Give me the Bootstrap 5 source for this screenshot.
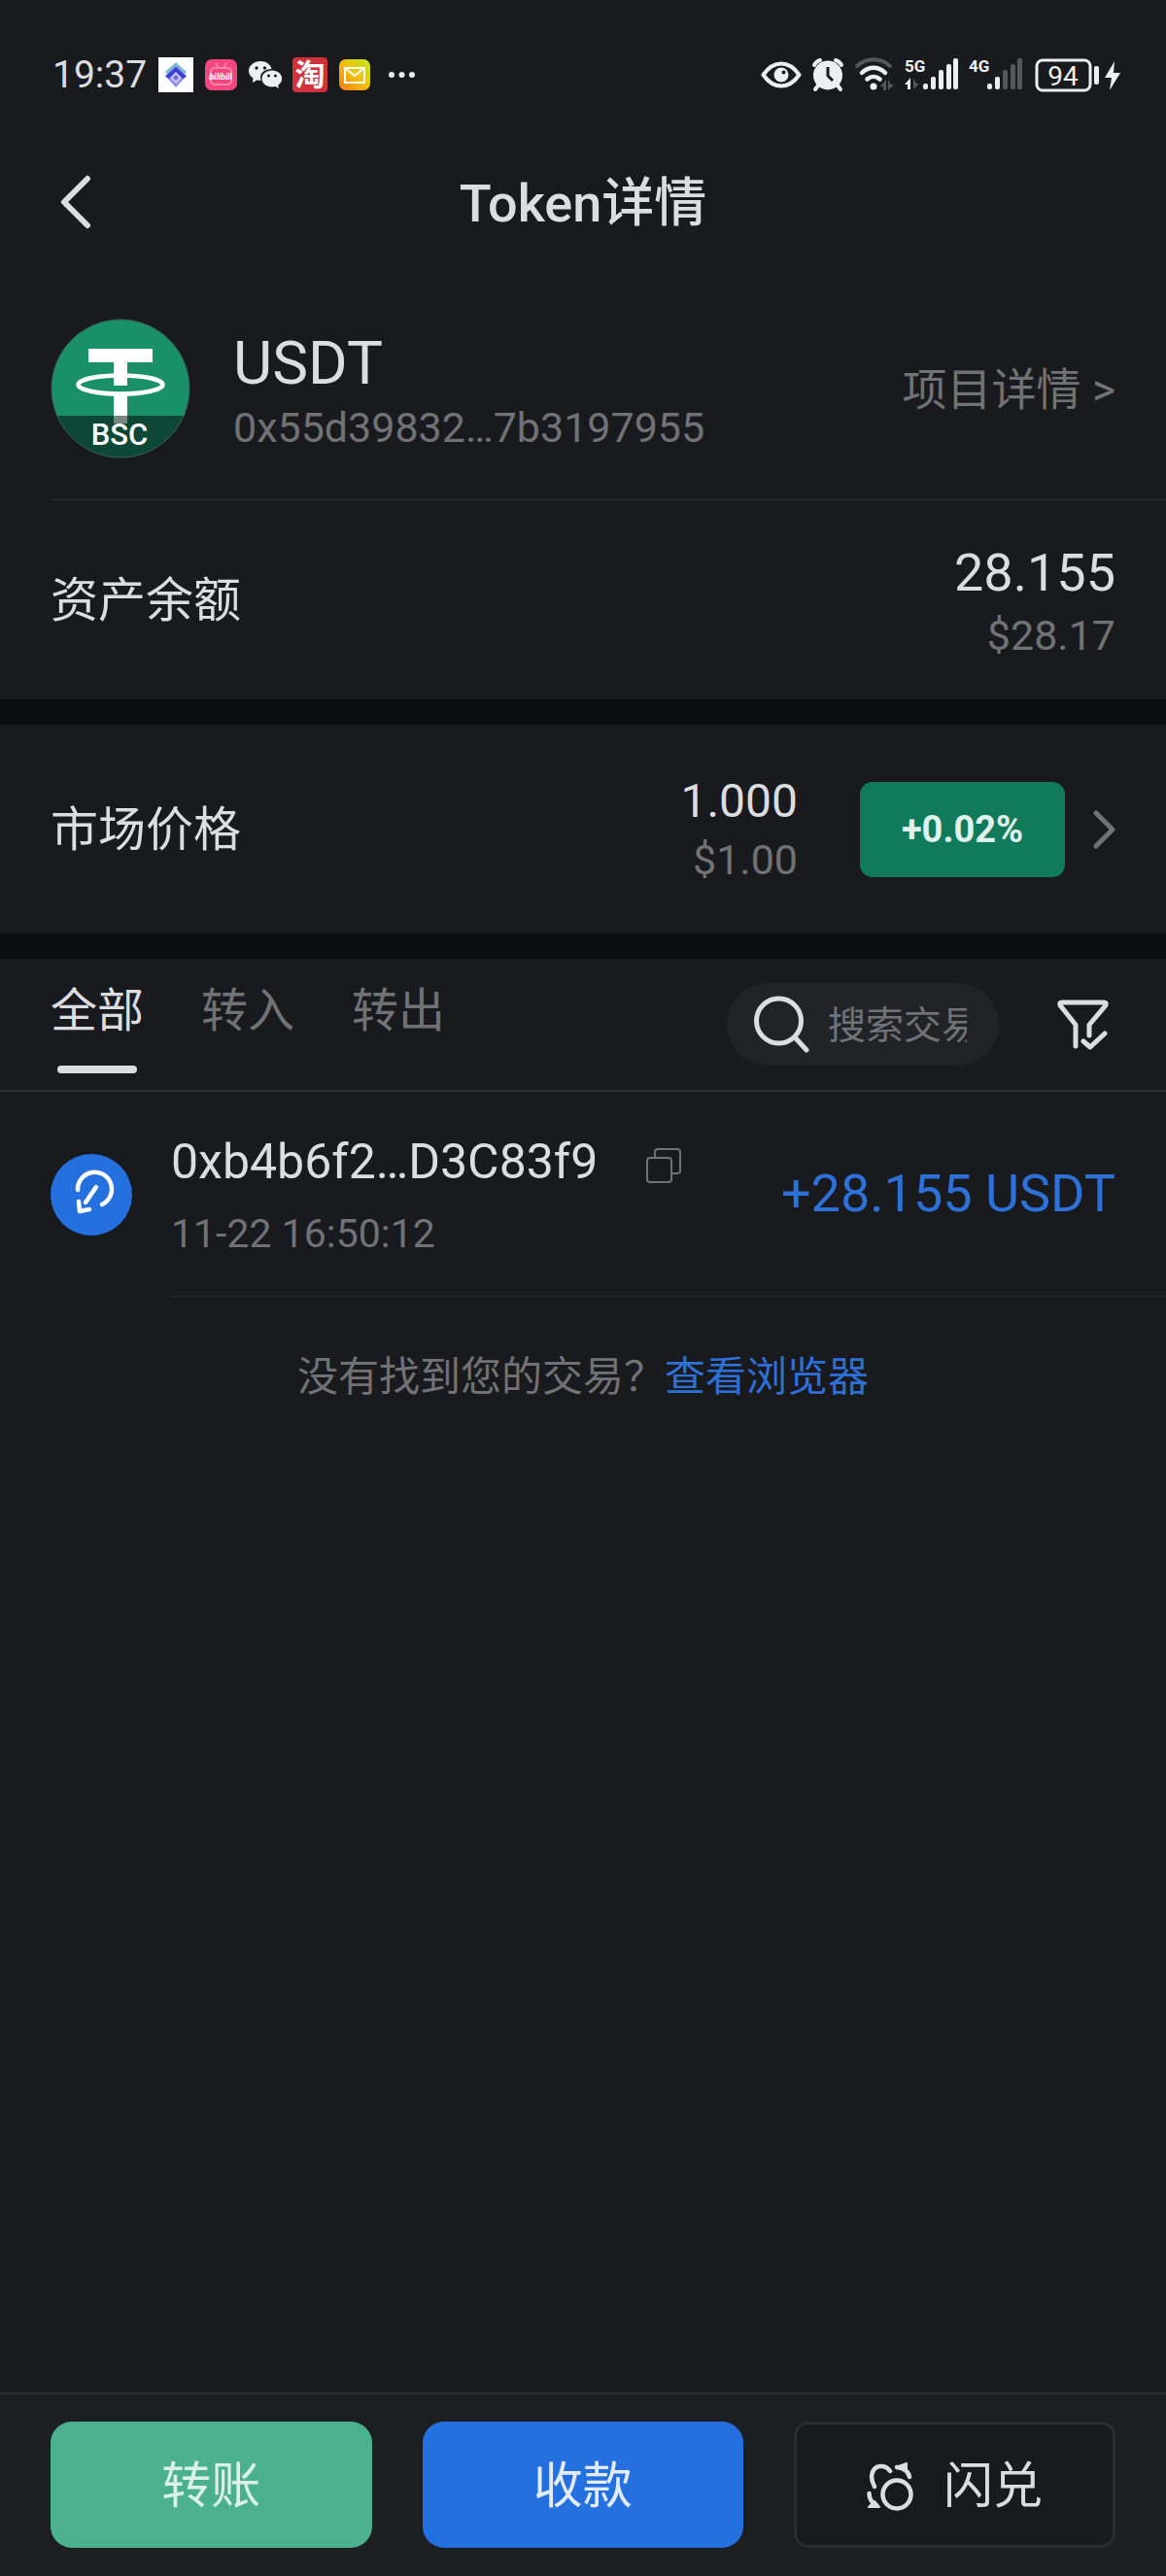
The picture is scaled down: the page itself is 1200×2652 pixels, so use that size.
<!DOCTYPE html>
<html lang="zh-CN">
<head>
<meta charset="utf-8">
<meta name="viewport" content="width=device-width, initial-scale=1">
<title>Token详情</title>
<link href="https://cdn.jsdelivr.net/npm/bootstrap@5.3.0/dist/css/bootstrap.min.css" rel="stylesheet">
<style>
  :root { --ink: #dcdde1; --dim: #717276; --edge: #2c2d31; --base: #191a1d; --brand: #2470df; --side: 52px; }
  body { background: var(--base); color: var(--ink); font-family: Roboto, "Noto Sans CJK SC", sans-serif; line-height: 64px; }
  svg { display: block; flex: none; }
  button { font: inherit; color: inherit; background: none; border: 0; padding: 0; }
  .side { padding-left: var(--side); padding-right: var(--side); }
  .dim { color: var(--dim); }
  .fs-label { font-size: 48px; }
  .fs-row { font-size: 49px; padding-top: 2px; }
  .fs-sub { font-size: 43px; }
  .fs-amount { font-size: 54px; }

  .status-bar { padding: 52px 47px 46px 54px; }
  .status-inner { height: 50px; }
  .clock { font-size: 39px; line-height: 50px; }
  .app-icons { gap: 10px; margin-left: 12px; }
  .sys-icons { gap: 10px; }

  .title-bar { height: 120px; display: grid; grid-template-columns: 1fr auto 1fr; padding-left: 58px; padding-right: 58px; }
  .title-bar h1 { font-size: 54px; font-weight: 500; line-height: 72px; padding-top: 4px; }

  .token-row { margin-left: var(--side); padding: 60px var(--side) 42px 0; border-bottom: 1px solid var(--edge); }
  .token-text { margin-left: 44px; padding-top: 4px; }
  .token-name { font-size: 62px; line-height: 76px; }
  .token-addr { line-height: 56px; }
  .project-link { font-size: 46px; color: var(--dim); text-decoration: none; padding-top: 2px; }

  .balance { height: 205px; }
  .balance-figures { padding-top: 8px; }
  .band { height: 26px; background: #0c0d0f; }
  .market { height: 215px; }
  .price { line-height: 60px; margin-right: 64px; padding-top: 3px; }
  .change { width: 211px; height: 98px; border-radius: 13px; background: #107a5b; color: #e0f1eb; font-size: 38px; font-weight: 700; margin-right: 28px; }

  .filter-row { border-bottom: 2px solid var(--edge); }
  .tab-set { gap: 59px; }
  .tab-set button { font-size: 48px; line-height: 72px; padding: 18px 0 17px; color: var(--dim); }
  .tab-set button::after { content: ""; display: block; width: 82px; height: 8px; margin: 20px auto 0; border-radius: 4px; }
  .tab-set button.active { color: var(--ink); }
  .tab-set button.active::after { background: var(--ink); }
  .search { width: 280px; height: 85px; border-radius: 43px; background: #222327; padding: 0 33px 0 27px; gap: 19px; margin-right: 58px; }
  .search input { flex: 1; min-width: 0; border: 0; padding: 3px 0 0; background: none; outline: 0; color: var(--ink); font-size: 39px; line-height: 60px; }
  .search input::placeholder { color: var(--dim); opacity: 1; }
  .filter-btn { margin-right: 4px; }

  .tx { padding-left: var(--side); gap: 40px; }
  .tx-body { height: 211px; padding-right: var(--side); border-bottom: 1px solid var(--edge); }
  .tx-text { padding-top: 8px; }
  .tx-hash { font-size: 50px; line-height: 74px; gap: 50px; }
  .tx-hash button { padding-top: 8px; }
  .tx-time { font-size: 41px; line-height: 74px; }
  .tx-amount, .explorer a { color: #2c70d8; }
  .explorer { font-size: 42px; line-height: 60px; padding-top: 53px; }
  .explorer a { text-decoration: none; }

  .actions { border-top: 2px solid var(--edge); background: #1d1e22; padding-top: 28px; padding-bottom: 29px; gap: 52px; }
  .actions .btn { flex: 1 1 33%; height: 130px; border: 0; border-radius: 22px; font-size: 51px; color: #e3ecf6; padding: 4px 0 0; }
  .actions .send { background: #4ab08e; color: #dbf0e8; }
  .actions .receive { background: var(--brand); }
  .actions .swap { background: var(--base); border: 3px solid var(--edge); border-radius: 15px; color: var(--ink); gap: 31px; }
</style>
</head>
<body class="min-vh-100 d-flex flex-column">

<div class="status-bar">
  <div class="status-inner d-flex align-items-center justify-content-between">
    <div class="d-flex align-items-center">
      <span class="clock">19:37</span>
      <div class="app-icons d-flex align-items-center">
        <svg width="36" height="36" viewBox="0 0 36 36"><path fill="#fff" d="M0 0h36v36H0z"/><path fill="#74c2cf" d="M18 5l11 10-11 10L7 15z"/><path fill="#8e8fee" d="M7 19l11-11 11 11-11 12z"/><path fill="#3a3cd6" d="M18 10l11 10-5 2-6-6-6 6-5-2z"/><path fill="#c9c4f7" d="M18 15l6 6-6 6-6-6z"/><path fill="#6d66de" d="M18 18l3 3-3 3-3-3z"/></svg>
        <svg width="36" height="36" viewBox="0 0 36 36"><rect x="2" y="2" width="33" height="32" rx="7" fill="#f4477f"/><g fill="none" stroke="#fa86aa" stroke-width="2"><rect x="8" y="11" width="21" height="17" rx="4"/><path d="M13 6l3 5M24 6l-3 5"/></g><text x="18" y="23" text-anchor="middle" font-size="9" font-weight="700" font-style="italic" fill="#fff">bilibili</text></svg>
        <svg width="36" height="36" viewBox="0 0 36 36"><path fill="#eceef2" d="M13 4C6.500 4 1 8.500 1 14c0 3 1.800 5.700 4.500 7.600L5 26l4.500-2.500c1.300.3 2.700.5 4 .4A10 10 0 0 1 13 21c0-5.500 5-9 11.500-9C23.500 7.500 19 4 13 4z"/><path fill="#eceef2" d="M25 13.500c-6 0-10.500 4-10.500 8.500s4.500 8.500 10.500 8.500c1.200 0 2.400-.2 3.500-.5L32 32l-.8-3.300c2.500-1.600 4-4 4-6.700 0-4.500-4.500-8.500-10.200-8.500z"/><g fill="#191a1d"><circle cx="9" cy="11" r="1.700"/><circle cx="17.500" cy="11" r="1.700"/><circle cx="21.500" cy="19" r="1.500"/><circle cx="28.500" cy="19" r="1.500"/></g></svg>
        <svg width="36" height="36" viewBox="0 0 36 36"><rect width="36" height="36" rx="4" fill="#d0313a"/><text x="18" y="29" text-anchor="middle" font-size="31" font-weight="700" fill="#fff">淘</text></svg>
        <svg width="36" height="36" viewBox="0 0 36 36"><defs><linearGradient id="mailFill" x1="0" y1="1" x2="1" y2="0"><stop offset="0" stop-color="#fb7a12"/><stop offset=".5" stop-color="#efc00f"/><stop offset="1" stop-color="#c3ea1a"/></linearGradient></defs><rect x="2" y="2" width="32" height="32" rx="7" fill="url(#mailFill)"/><path d="M8 11h20v15H8zl10 8 10-8" fill="none" stroke="#fff" stroke-width="2"/></svg>
        <svg width="36" height="36" viewBox="0 0 36 36" fill="#eceef2"><circle cx="10" cy="18" r="3"/><circle cx="20.500" cy="18" r="3"/><circle cx="31" cy="18" r="3"/></svg>
      </div>
    </div>
    <div class="sys-icons d-flex align-items-center" aria-hidden="true">
      <svg width="42" height="36" viewBox="0 0 42 36"><path d="M2.500 18C8 10 14 6.500 21 6.500S34 10 39.500 18C34 26 28 29.500 21 29.500S8 26 2.500 18z" fill="none" stroke="#eceef2" stroke-width="4" stroke-linejoin="round"/><circle cx="21" cy="18" r="7.500" fill="#eceef2"/><circle cx="23.500" cy="15.500" r="2" fill="#191a1d"/></svg>
      <svg width="34" height="36" viewBox="0 0 34 36"><g stroke="#eceef2" stroke-linecap="round" fill="none"><path stroke-width="4" d="M3 8a10 10 0 0 1 6-5M31 8a10 10 0 0 0-6-5M7 29l-3 4M27 29l3 4"/></g><circle cx="17" cy="18.500" r="15" fill="#eceef2"/><path d="M17 10v9l5 5" fill="none" stroke="#191a1d" stroke-width="3"/></svg>
      <svg width="42" height="36" viewBox="0 0 42 36" fill="none" stroke-linecap="round"><path stroke="#55565a" stroke-width="4" d="M3 9c10-9 24-9 34 0"/><path stroke="#eceef2" stroke-width="4.500" d="M8 16c7-7 17-7 24 0M13.500 22.500c4-3.500 9-3.500 13 0"/><circle cx="20" cy="30" r="3.500" fill="#eceef2"/><path fill="#55565a" d="M27 30l6-7v11h-3v-4zM35 23v11l6-6h-3z"/></svg>
      <svg width="56" height="36" viewBox="0 0 56 36" fill="#eceef2"><text x="0" y="15" font-size="17" font-weight="700">5G</text><path d="M0 28l6-7v12H3v-5z"/><path fill="#55565a" d="M9 21v12l6-6h-3z"/><rect x="19" y="27" width="5" height="6" rx="2"/><rect x="27" y="20" width="5" height="13" rx="2"/><rect x="35" y="13" width="5" height="20" rx="2"/><rect x="43" y="7" width="5" height="26" rx="2"/><rect x="50" y="1" width="5" height="32" rx="2"/></svg>
      <svg width="56" height="36" viewBox="0 0 56 36" fill="#eceef2"><text x="0" y="15" font-size="17" font-weight="700">4G</text><rect x="19" y="27" width="5" height="6" rx="2"/><rect x="27" y="20" width="5" height="13" rx="2"/><g fill="#55565a"><rect x="35" y="13" width="5" height="20" rx="2"/><rect x="43" y="7" width="5" height="26" rx="2"/><rect x="50" y="1" width="5" height="32" rx="2"/></g></svg>
      <svg width="90" height="36" viewBox="0 0 90 36" fill="#eceef2"><rect x="4" y="3" width="55" height="31" rx="6" fill="none" stroke="#eceef2" stroke-width="3"/><text x="31" y="29" text-anchor="middle" font-size="28">94</text><rect x="63" y="9" width="5" height="19" rx="2"/><path d="M84 4L74 21h7l-2 13 11-18h-7z"/></svg>
    </div>
  </div>
</div>

<header class="title-bar align-items-center">
  <button type="button" aria-label="返回"><svg width="36" height="56" viewBox="0 0 36 56"><path d="M32 4L8 28l24 24" fill="none" stroke="#dcdde1" stroke-width="6" stroke-linecap="round" stroke-linejoin="round"/></svg></button>
  <h1 class="m-0">Token详情</h1>
</header>

<main class="flex-grow-1">
  <section class="token-row d-flex align-items-center">
    <svg width="144" height="144" viewBox="0 0 144 144" role="img" aria-label="USDT BSC"><defs><clipPath id="coin"><circle cx="72" cy="72" r="71"/></clipPath></defs><g clip-path="url(#coin)"><path fill="#1a9069" d="M0 0h144v144H0z"/><path fill="#fff" d="M39 31h66v14H79v24H65V45H39zM65 79h14v21H65z"/><ellipse cx="72" cy="68" rx="43.500" ry="9.500" fill="none" stroke="#fff" stroke-width="4.500"/><path fill="#0d4736" d="M0 100h144v44H0z"/><path fill="#77877f" d="M65 100h14v8H65z"/></g><circle cx="72" cy="72" r="71" fill="none" stroke="#3b5d52"/><text x="71" y="130" text-anchor="middle" font-size="31" font-weight="500" fill="#fff">BSC</text></svg>
    <div class="token-text flex-grow-1">
      <div class="token-name">USDT</div>
      <div class="token-addr fs-sub dim">0x55d39832…7b3197955</div>
    </div>
    <a href="#" class="project-link">项目详情 &gt;</a>
  </section>

  <section class="balance side d-flex align-items-center justify-content-between">
    <span class="fs-row">资产余额</span>
    <div class="balance-figures text-end">
      <div class="fs-amount">28.155</div>
      <div class="fs-sub dim">$28.17</div>
    </div>
  </section>

  <div class="band"></div>

  <section class="market side d-flex align-items-center">
    <span class="fs-row me-auto">市场价格</span>
    <div class="price text-end">
      <div class="fs-label">1.000</div>
      <div class="fs-sub dim">$1.00</div>
    </div>
    <div class="change d-flex align-items-center justify-content-center">+0.02%</div>
    <svg width="24" height="40" viewBox="0 0 24 40"><path d="M4 3l17 17L4 37" fill="none" stroke="#717276" stroke-width="5" stroke-linecap="round" stroke-linejoin="round"/></svg>
  </section>

  <div class="band"></div>

  <section class="filter-row side d-flex align-items-center">
    <div class="tab-set d-flex me-auto" role="tablist">
      <button type="button" role="tab" class="active" aria-selected="true">全部</button>
      <button type="button" role="tab" aria-selected="false">转入</button>
      <button type="button" role="tab" aria-selected="false">转出</button>
    </div>
    <div class="search d-flex align-items-center">
      <svg width="58" height="60" viewBox="0 0 58 60" fill="none" stroke="#dcdde1" stroke-linecap="round"><circle cx="26.500" cy="26" r="23" stroke-width="5"/><path stroke-width="5" d="M44 44l11 12"/></svg>
      <label for="txSearch" class="visually-hidden">搜索交易</label>
      <input id="txSearch" type="text" placeholder="搜索交易">
    </div>
    <button type="button" class="filter-btn" aria-label="筛选"><svg width="58" height="52" viewBox="0 0 58 52" fill="none" stroke="#dcdde1" stroke-width="5" stroke-linecap="round" stroke-linejoin="round"><path d="M21 48V26L5 6c-1-2 0-3 2-3h43c2 0 3 1 2 3L35 26v11"/><path d="M29 43l7 6 15-14"/></svg></button>
  </section>

  <section class="tx d-flex align-items-center">
    <svg width="84" height="84" viewBox="0 0 84 84"><circle cx="42" cy="42" r="42" fill="#2470df"/><g fill="none" stroke="#fff" stroke-width="4.500" stroke-linecap="round" stroke-linejoin="round"><path d="M28 37a17.500 17.500 0 1 1 25 15"/><path d="M47 34L36 50M29 49l1 10 10-2"/></g></svg>
    <div class="tx-body flex-grow-1 d-flex align-items-center justify-content-between">
      <div class="tx-text">
        <div class="tx-hash d-flex align-items-center">0xb4b6f2…D3C83f9
          <button type="button" aria-label="复制"><svg width="36" height="36" viewBox="0 0 36 36" fill="none" stroke="#717276" stroke-width="2"><rect x="1" y="10" width="25" height="25" rx="3"/><path d="M9 9V4a3 3 0 0 1 3-3h20a3 3 0 0 1 3 3v19a3 3 0 0 1-3 3h-5"/></svg></button>
        </div>
        <div class="tx-time dim">11-22 16:50:12</div>
      </div>
      <div class="tx-amount fs-amount">+28.155 USDT</div>
    </div>
  </section>

  <p class="explorer dim text-center m-0">没有找到您的交易？<a href="#">查看浏览器</a></p>
</main>

<footer class="actions side d-flex">
  <button type="button" class="btn send">转账</button>
  <button type="button" class="btn receive">收款</button>
  <button type="button" class="btn swap d-flex align-items-center justify-content-center">
    <svg width="48" height="50" viewBox="0 0 48 50" fill="none" stroke="#dcdde1" stroke-width="4.500" stroke-linecap="round" stroke-linejoin="round"><circle cx="31" cy="33" r="14.500"/><path d="M8 25C2 14 6 4 15 4c4 0 7 2 9 5M31 5c7 1 12 4 13 10M2.500 32c0 5 2 9 7 12"/><path fill="#dcdde1" stroke-width="2" d="M30 5l11-4v7zM2 46h11l-5-6z"/></svg>
    闪兑
  </button>
</footer>

<script src="https://cdn.jsdelivr.net/npm/bootstrap@5.3.0/dist/js/bootstrap.bundle.min.js"></script>
</body>
</html>
